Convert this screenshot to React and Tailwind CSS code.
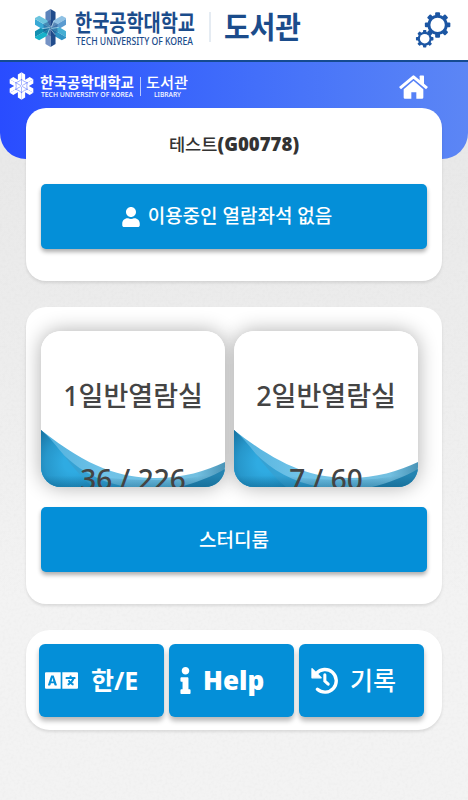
import { FaInfo, FaLanguage, FaUser } from "react-icons/fa";

const rooms = [
  { id: "r1", name: "1일반열람실", used: 36, total: 226 },
  { id: "r2", name: "2일반열람실", used: 7, total: 60 },
];

const Paper = () => (
  <svg className="absolute inset-0 -z-10 h-full w-full" aria-hidden="true">
    <defs>
      <linearGradient id="paper" x1="0" y1="0" x2="0" y2="1">
        <stop offset="0.2" stopColor="#e9e9e9" />
        <stop offset="0.45" stopColor="#ededed" />
        <stop offset="0.75" stopColor="#f3f3f3" />
        <stop offset="1" stopColor="#f3f3f3" />
      </linearGradient>
      <filter id="grain" x="0" y="0" width="100%" height="100%">
        <feTurbulence type="fractalNoise" baseFrequency="0.35" numOctaves="2" />
        <feColorMatrix values="0 0 0 0 0.4  0 0 0 0 0.4  0 0 0 0 0.4  0.12 0 0 0 -0.05" />
      </filter>
    </defs>
    <rect width="100%" height="100%" fill="url(#paper)" />
    <rect width="100%" height="100%" filter="url(#grain)" />
  </svg>
);

const ARMS = [
  ["#5c83bb", "#214c8c"],
  ["#8fc1e4", "#5b9bd0"],
  ["#45aed3", "#2f93c4"],
  ["#214c8c", "#7593c5"],
  ["#16b3ca", "#128fb1"],
  ["#39a9d5", "#6cc4de"],
];

const Snowflake = ({ mono, className }) => (
  <svg viewBox="-16 -20 32 40" className={className}>
    {ARMS.map(([left, right], i) => (
      <g key={i} transform={`rotate(${i * 60})`}>
        <path d="M0 0-5.2-7v-9.500L0-19.500z" fill={mono ? "#fff" : left} />
        <path d="M0 0 5.200-7v-9.500L0-19.500z" fill={mono ? "#fff" : right} />
        <path d="M0 0-4.200-5.500 0-8.500 4.200-5.500z" fill={mono ? "#fff" : "#1b4583"} fillOpacity={mono ? 1 : 0.45} />
        {mono && (
          <path d="M0-1v-9M-4.500-6 0-9.500 4.500-6" fill="none" stroke="#3152fe" strokeWidth="0.6" />
        )}
        {!mono && <path d="M0-1-4.800-7" stroke="#c9e6f3" strokeWidth="0.6" />}
      </g>
    ))}
  </svg>
);

const Gear = ({ cx, cy, r, hole }) => (
  <g transform={`translate(${cx} ${cy})`} fill="#1c56a3">
    {Array.from({ length: 8 }, (_, i) => (
      <rect
        key={i}
        x={-r * 0.24}
        y={-r * 1.25}
        width={r * 0.48}
        height={r * 0.5}
        rx={r * 0.1}
        transform={`rotate(${i * 45})`}
      />
    ))}
    <circle r={r} />
    <circle r={hole} fill="#fff" />
  </g>
);

const HomeIcon = ({ className }) => (
  <svg viewBox="0 0 87 71" className={className} fill="currentColor">
    <path d="M3 39 43.500 5 84 39" fill="none" stroke="currentColor" strokeWidth="9" strokeLinejoin="round" />
    <path d="M62 3q0-2 2-2h9q2 0 2 2v29L62 21z" />
    <path d="M14 42 43.500 17 73 42v25q0 4-4 4H52V51H37v20H18q-4 0-4-4z" />
  </svg>
);

const HistoryIcon = ({ className }) => (
  <svg viewBox="0 0 80 80" className={className} fill="none" stroke="currentColor">
    <path d="M16 19A33.500 33.500 0 1 1 19 66" strokeWidth="10" strokeLinecap="round" />
    <path d="M3 5v27h27z" fill="currentColor" strokeWidth="4" strokeLinejoin="round" />
    <path d="M41 23v19l10 9" strokeWidth="9" strokeLinecap="round" />
  </svg>
);

const Wave = ({ id }) => (
  <svg
    viewBox="0 0 184 156"
    preserveAspectRatio="none"
    className="absolute inset-0 h-full w-full"
  >
    <defs>
      <radialGradient id={`${id}-left`} cx="32" cy="132" r="46" gradientUnits="userSpaceOnUse">
        <stop offset="0.2" stopColor="#2fabe2" />
        <stop offset="0.6" stopColor="#2797cb" />
        <stop offset="1" stopColor="#17719f" />
      </radialGradient>
      <linearGradient id={`${id}-mid`} x1="0" y1="0" x2="1" y2="0">
        <stop offset="0" stopColor="#4fb0dd" />
        <stop offset="0.35" stopColor="#70c3e8" />
        <stop offset="0.85" stopColor="#72bfe0" />
        <stop offset="1" stopColor="#4a94b7" />
      </linearGradient>
      <linearGradient id={`${id}-edge`} x1="0" y1="0" x2="0" y2="1">
        <stop offset="0.4" stopColor="#07577f" stopOpacity="0" />
        <stop offset="1" stopColor="#07577f" stopOpacity="0.42" />
      </linearGradient>
    </defs>
    <path d="M0 99C48 137 80 147 115 147C142 147 165 140 184 131V156H0Z" fill={`url(#${id}-mid)`} />
    <path d="M0 99C26 131 48 149 86 156H0Z" fill="#35a2d4" />
    <path d="M0 99C18 114 30 138 52 156H0Z" fill={`url(#${id}-left)`} />
    <path d="M138 156C154 152 170 146 184 138V156Z" fill="#2484b1" />
    <path d="M0 140C50 144 70 149 115 149C150 149 165 144 184 137V156H0Z" fill={`url(#${id}-edge)`} />
  </svg>
);

const Card = ({ className, children }) => (
  <section className={`mx-[26px] bg-white shadow-[0_2px_3px_rgba(0,0,0,0.1)] ${className}`}>
    {children}
  </section>
);

const RoomCard = ({ room }) => (
  <button className="relative block h-[156px] w-[184px] overflow-hidden rounded-[20px] bg-white font-['Noto_Sans','Noto_Sans_CJK_KR',sans-serif] text-[27px] leading-[40px] font-medium text-[#444]">
    <Wave id={room.id} />
    <span className="absolute inset-x-0 top-[45px] text-center whitespace-nowrap">
      {room.name}
    </span>
    <span className="absolute inset-x-0 top-[128px] text-center text-[28px] whitespace-nowrap">
      {room.used} / {room.total}
    </span>
  </button>
);

const WIDE_BUTTON =
  "flex w-[386px] items-center justify-center rounded-[5px] bg-[#048fd8] text-[19px] font-medium text-white shadow-[0_3px_4px_rgba(0,0,0,0.32)]";
const MENU_BUTTON =
  "flex h-[73px] w-[125px] items-center rounded-[6px] bg-[#048fd8] text-[25px] text-white shadow-[0_4px_5px_rgba(0,0,0,0.28)]";

export default function App() {
  return (
    <div className="relative isolate h-[800px] w-[468px] overflow-hidden font-['Open_Sans','Noto_Sans_CJK_KR',sans-serif]">
      <Paper />

      <div className="flex h-[62px] items-start border-b-2 border-[#154b91] bg-white">
        <Snowflake className="mt-[8px] ml-[35px] h-[40px] w-[31px]" />
        <svg width="240" height="50" className="ml-[8px] fill-[#1b4c8b]">
          <text x="1" y="31" fontSize="23" fontWeight="700" textLength="120" lengthAdjust="spacingAndGlyphs">
            한국공학대학교
          </text>
          <text x="2" y="45" fontSize="10.5" fontWeight="500" textLength="117" lengthAdjust="spacingAndGlyphs" className="font-['Noto_Sans']">
            TECH UNIVERSITY OF KOREA
          </text>
          <path d="M136 12v30" stroke="#cbd8e6" />
          <text x="150" y="38" fontSize="30" fontWeight="700" textLength="77" lengthAdjust="spacingAndGlyphs">
            도서관
          </text>
        </svg>
        <svg width="36" height="37" className="mt-[12px] ml-[101px]">
          <Gear cx={22.6} cy={12.9} r={10.2} hole={7.2} />
          <Gear cx={9.7} cy={26.7} r={7} hole={4.8} />
        </svg>
      </div>

      <header className="flex h-[97px] items-start rounded-b-[26px] bg-linear-to-r from-[#294cff] to-[#5c86f5]">
        <Snowflake mono className="mt-[10px] ml-[9px] h-[28px] w-[25px]" />
        <svg width="156" height="42" className="ml-[5px] fill-white">
          <text x="1" y="26" fontSize="15" fontWeight="700" textLength="94" lengthAdjust="spacingAndGlyphs">
            한국공학대학교
          </text>
          <text x="2" y="35" fontSize="6.6" fontWeight="500" textLength="92" lengthAdjust="spacingAndGlyphs" className="font-['Noto_Sans']">
            TECH UNIVERSITY OF KOREA
          </text>
          <path d="M101.5 15v19" stroke="#b9c8ff" />
          <text x="107" y="25.500" fontSize="15" fontWeight="500" textLength="42" lengthAdjust="spacingAndGlyphs">
            도서관
          </text>
          <text x="115" y="35" fontSize="6.6" fontWeight="500" textLength="27" lengthAdjust="spacingAndGlyphs" className="font-['Noto_Sans']">
            LIBRARY
          </text>
        </svg>
        <HomeIcon className="mt-[13px] ml-[204px] h-[24px] w-[29px] text-white" />
      </header>

      <Card className="mt-[-51px] h-[173px] rounded-[20px] px-[15px]">
        <h1 className="h-[76px] text-center text-[17.6px] leading-[71px] font-medium text-[#333]">
          테스트<span className="text-[18.6px] font-extrabold">(G00778)</span>
        </h1>
        <button className={`h-[65px] pr-[14px] ${WIDE_BUTTON}`}>
          <FaUser className="mr-[8px] h-[20px] w-[18px]" />
          이용중인 열람좌석 없음
        </button>
      </Card>

      <Card className="mt-[26px] h-[297px] rounded-[20px] px-[15px] pt-[24px]">
        <div className="flex gap-[9px]">
          {rooms.map((room) => (
            <div key={room.id} className="rounded-[20px] shadow-[0_0_20px_rgba(0,0,0,0.32)]">
              <RoomCard room={room} />
            </div>
          ))}
        </div>
        <button className={`relative mt-[20px] h-[65px] pt-[2px] ${WIDE_BUTTON}`}>스터디룸</button>
      </Card>

      <Card className="mt-[26px] flex h-[100px] gap-[5px] rounded-[24px] pt-[14px] pl-[13px]">
        <button className={`${MENU_BUTTON} pl-[6px]`}>
          <FaLanguage className="mr-[13px] h-[33px] w-[33px]" />
          <span className="font-bold">한/E</span>
        </button>
        <button className={`${MENU_BUTTON} pl-[11px]`}>
          <FaInfo className="mr-[12px] h-[27px] w-[11px]" />
          <span className="text-[26px] font-extrabold">Help</span>
        </button>
        <button className={`${MENU_BUTTON} pl-[12px]`}>
          <HistoryIcon className="mr-[12px] h-[27px] w-[27px]" />
          <span className="font-medium">기록</span>
        </button>
      </Card>
    </div>
  );
}
